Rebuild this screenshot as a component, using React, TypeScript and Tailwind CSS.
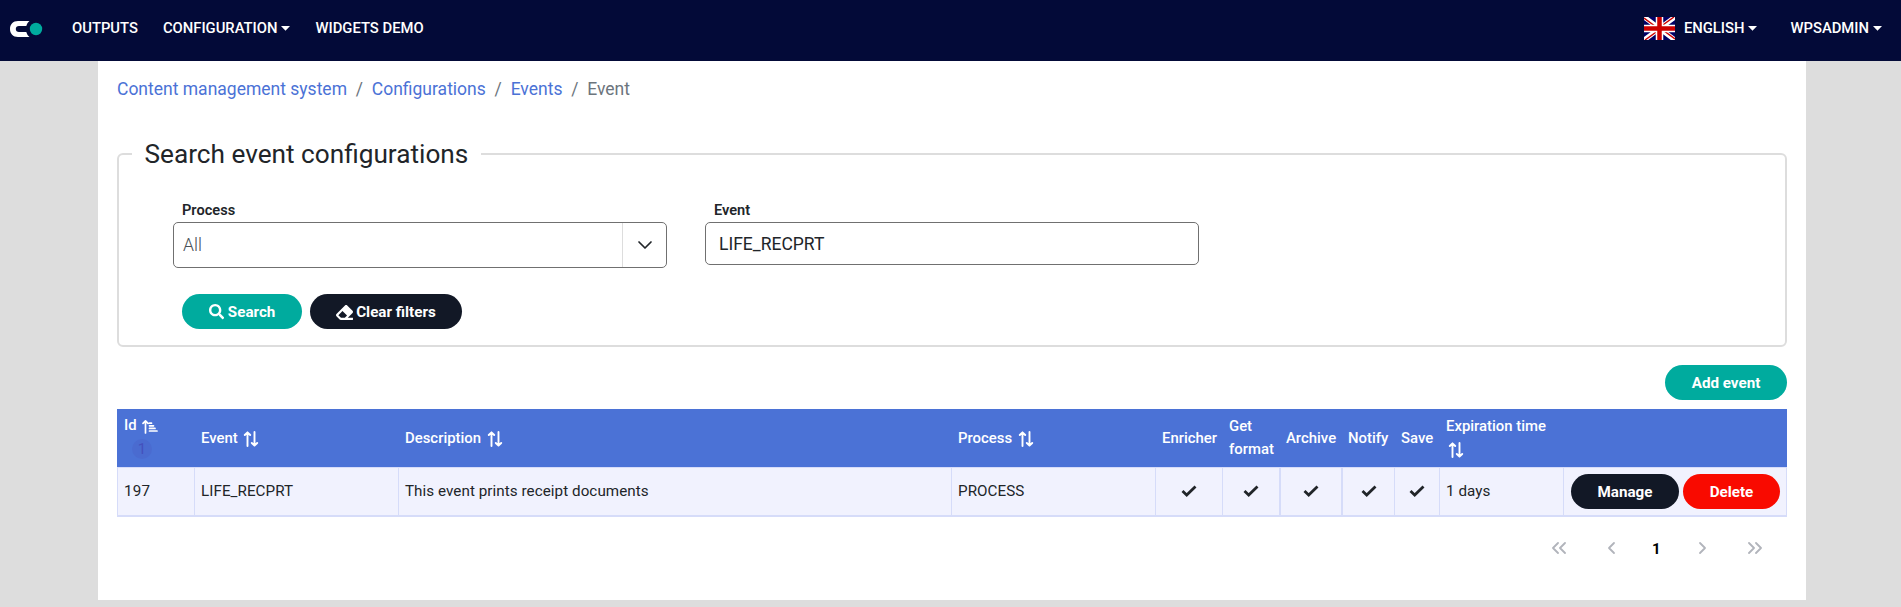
import type { ReactNode } from 'react';
import { FaSearch, FaEraser } from 'react-icons/fa';

function Logo() {
  return (
    <svg className="mt-[21px] h-4 w-[33px]" viewBox="0 0 33 16">
      <path d="M19.5 0H8C3 0 0 3.5 0 8s3 8 8 8h11.5C18 14.8 17 13.300 16.300 11H9C7 11 5.800 9.800 5.800 8S7 5 9 5h7.300C17 2.700 18 1.200 19.500 0Z" fill="#fff" />
      <circle cx="26" cy="8" r="6.200" fill="#00ab9e" />
    </svg>
  );
}

function UkFlag() {
  return (
    <svg className="h-[23px] w-[31px]" viewBox="0 0 31 23">
      <rect width="31" height="23" fill="#006" />
      <path d="M0 0L31 23M31 0L0 23" stroke="#fff" strokeWidth="5" />
      <path d="M0 1L15 12M31 22L16 11M30 0L16 10M1 23L15 13" stroke="#c00" strokeWidth="1.500" />
      <path d="M15.500 0V23M0 11.500H31" stroke="#fff" strokeWidth="7.500" />
      <path d="M15.500 0V23M0 11.500H31" stroke="#c00" strokeWidth="4.500" />
    </svg>
  );
}

function Caret() {
  return (
    <svg className="mt-[1px] ml-1 h-[5px] w-[9px]" viewBox="0 0 9 5" fill="#fff">
      <path d="M0 0H9L4.500 4.700Z" />
    </svg>
  );
}

function Sort() {
  return (
    <svg className="ml-[2px] inline-block h-4 w-4 align-[-4px]" viewBox="0 0 16 16" fill="none" stroke="#fff" strokeWidth="1.900" strokeLinecap="round" strokeLinejoin="round">
      <path d="M4.500 15V1.500M1.800 4L4.500 1.300L7.200 4M11.500 1V14.500M8.800 12L11.500 14.700L14.200 12" />
    </svg>
  );
}

function SortAmount() {
  return (
    <svg className="mt-[2px] h-4 w-4" viewBox="0 0 16 16" fill="none" stroke="#fff" strokeWidth="1.700" strokeLinecap="round" strokeLinejoin="round">
      <path d="M3.500 14V2M1 4.300L3.500 1.800L6 4.300M7.500 4.200H9.500M7.500 6.800H11.500M7.500 9.400H13M7.500 12H15" />
    </svg>
  );
}

function Check() {
  return (
    <svg className="mx-auto -mt-[2px] h-4 w-4" viewBox="0 0 16 16" fill="none" stroke="#212529" strokeWidth="2.800">
      <path d="M1.500 8L5.700 12L14.500 3.500" />
    </svg>
  );
}

function Chevron({ d }: { d: string }) {
  return (
    <svg className="h-[14px] w-[14px]" viewBox="0 0 14 14" fill="none" stroke="#b1b4bb" strokeWidth="1.800" strokeLinecap="round" strokeLinejoin="round">
      <path d={d} />
    </svg>
  );
}

function Pill({ className, children }: { className: string; children: ReactNode }) {
  return (
    <button className={'flex h-[35px] items-center justify-center rounded-full pt-px text-[15.200px] font-bold text-white ' + className}>
      {children}
    </button>
  );
}

function Th({ children }: { children?: ReactNode }) {
  return <th className="pl-[7px] text-left font-medium whitespace-nowrap">{children}</th>;
}

function Td({ className = '', children }: { className?: string; children: ReactNode }) {
  return <td className={'border-t border-b-2 border-l border-[#d6dcf9] p-0 ' + className}>{children}</td>;
}

export default function App() {
  return (
    <div className="flex h-[607px] w-[1901px] flex-col bg-[#ddd] font-[Roboto,sans-serif] text-[#212529]">
      <nav className="flex h-[61px] items-start bg-[#030a38] pr-[19px] pl-[10px] text-[14.800px] leading-[56px] font-medium text-white">
        <Logo />
        <span className="ml-[29px]">OUTPUTS</span>
        <span className="ml-[25px] flex items-center">CONFIGURATION<Caret /></span>
        <span className="ml-[25px]">WIDGETS DEMO</span>
        <span className="ml-auto flex items-center">
          <UkFlag />
          <span className="ml-[9px]">ENGLISH</span>
          <Caret />
        </span>
        <span className="ml-[33px] flex items-center">WPSADMIN<Caret /></span>
      </nav>
      <main className="ml-[98px] h-[539px] w-[1708px] bg-white px-[19px] pt-[16px]">
        <div className="flex h-6 items-center gap-[8.800px] text-[17.500px] text-[#6c757d]">
          <span className="text-[#4b72d6]">Content management system</span>
          <span>/</span>
          <span className="text-[#4b72d6]">Configurations</span>
          <span>/</span>
          <span className="text-[#4b72d6]">Events</span>
          <span>/</span>
          <span>Event</span>
        </div>
        <fieldset className="mt-[33px] h-[213px] rounded-[6px] border-2 border-[#ddd]">
          <legend className="ml-[13px] h-[39px] px-[12.500px] pt-px text-[26.200px] leading-[39px]">Search event configurations</legend>
          <div className="flex gap-[38px] pt-[20px] pl-[54px]">
            <div className="w-[494px]">
              <div className="h-[29px] pt-[9px] pl-[9px] text-[14.600px] leading-4 font-semibold">Process</div>
              <div className="flex h-[46px] rounded-[5px] border border-[#707070]">
                <span className="flex-1 pl-[9px] text-[17.600px] leading-[44px] font-light text-[#495057]">All</span>
                <span className="flex w-[44px] items-center justify-center border-l border-[#ddd]">
                  <svg className="h-4 w-4" viewBox="0 0 16 16" fill="none" stroke="#212529" strokeWidth="1.700" strokeLinecap="round" strokeLinejoin="round"><path d="M2 5L8 11L14 5" /></svg>
                </span>
              </div>
            </div>
            <div className="w-[494px]">
              <div className="h-[29px] pt-[9px] pl-[9px] text-[14.600px] leading-4 font-semibold">Event</div>
              <div className="h-[43px] rounded-[5px] border border-[#707070] pl-[13px] text-[17.500px] leading-[42px]">LIFE_RECPRT</div>
            </div>
          </div>
          <div className="mt-[26px] flex gap-2 pl-[63px]">
            <Pill className="w-[120px] gap-1 bg-[#00ab9e]"><FaSearch />Search</Pill>
            <Pill className="w-[152px] gap-[3px] bg-[#121826]">
              <FaEraser className="h-[17px] w-[17px]" />Clear filters
            </Pill>
          </div>
        </fieldset>
        <div className="mt-[18px] flex justify-end"><Pill className="w-[122px] bg-[#00ab9e]">Add event</Pill></div>
        <table className="mt-[9px] w-[1670px] table-fixed border-separate border-spacing-0 text-[14.900px]">
          <colgroup>
            <col className="w-[77px]" /><col className="w-[204px]" /><col className="w-[553px]" /><col className="w-[204px]" /><col className="w-[67px]" /><col className="w-[57px]" /><col className="w-[62px]" /><col className="w-[53px]" /><col className="w-[45px]" /><col className="w-[124px]" /><col className="w-[224px]" />
          </colgroup>
          <thead>
            <tr className="h-[58px] bg-[#4b72d6] leading-[23px] text-white">
              <Th>
                <div className="-mt-[3px] flex items-center gap-[5px]">Id <SortAmount /></div>
                <div className="mt-[2px] ml-[8px] h-5 w-5 rounded-full bg-[#4a6bd0] text-center text-[15px] leading-5 font-normal text-[#4451bd]">1</div>
              </Th>
              <Th>Event <Sort /></Th>
              <Th>Description <Sort /></Th>
              <Th>Process <Sort /></Th>
              <Th>Enricher</Th>
              <Th>Get<br />format</Th>
              <Th>Archive</Th>
              <Th>Notify</Th>
              <Th>Save</Th>
              <Th>Expiration time<br /><Sort /></Th>
              <Th />
            </tr>
          </thead>
          <tbody>
            <tr className="h-[50px] bg-[#f1f2fe] text-[15.200px]">
              <Td className="pl-[6px] tracking-[0.200px]">197</Td>
              <Td className="pl-[6px] tracking-[0.060px]">LIFE_RECPRT</Td>
              <Td className="pl-[6px] tracking-[0.060px]">This event prints receipt documents</Td>
              <Td className="pl-[6px] tracking-[0.060px]">PROCESS</Td>
              <Td><Check /></Td>
              <Td><Check /></Td>
              <Td className="border-l-2"><Check /></Td>
              <Td className="border-l-2"><Check /></Td>
              <Td><Check /></Td>
              <Td className="pl-[6px] tracking-[0.060px]">1 days</Td>
              <Td className="border-r pl-[7px]">
                <div className="flex gap-1">
                  <Pill className="w-[108px] bg-[#121826]">Manage</Pill>
                  <Pill className="w-[97px] bg-[#f90a00]">Delete</Pill>
                </div>
              </Td>
            </tr>
          </tbody>
        </table>
        <div className="mt-[19px] flex h-6 items-center pl-[1435px] text-[15px] font-bold text-black">
          <Chevron d="M6 2L1 7L6 12M13 2L8 7L13 12" />
          <span className="ml-[39px]"><Chevron d="M9 2L4 7L9 12" /></span>
          <span className="ml-[33px] pt-[2px]">1</span>
          <span className="ml-[34px]"><Chevron d="M5 2L10 7L5 12" /></span>
          <span className="ml-[39px]"><Chevron d="M1 2L6 7L1 12M8 2L13 7L8 12" /></span>
        </div>
      </main>
    </div>
  );
}
